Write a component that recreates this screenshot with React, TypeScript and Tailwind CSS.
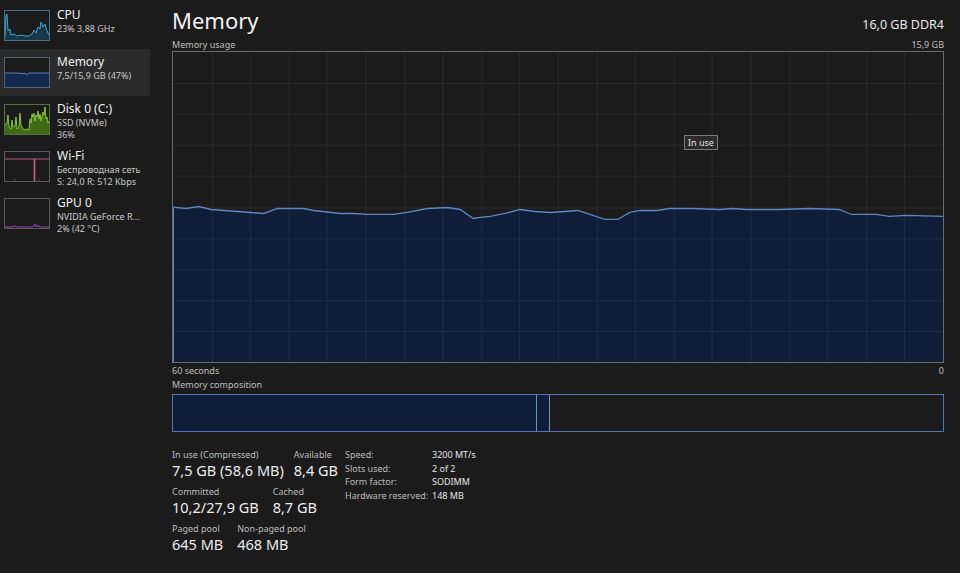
import React from "react";

const FONT = { fontFamily: '"Noto Sans", "Open Sans", Arial, sans-serif' };

const linePts: [number, number][] = [
  [172, 206.7], [185, 208], [198, 206], [210, 209], [237, 211], [250, 212], [263, 213], [277, 208],
  [303, 208], [313, 210], [340, 213], [353, 213], [367, 214], [393, 214], [407, 212], [427, 208],
  [447, 207], [460, 209], [473, 218], [480, 217], [490, 216], [505, 213], [520, 209], [535, 211],
  [550, 212], [565, 211], [578, 210], [590, 214], [605, 219], [618, 219], [630, 212], [640, 210],
  [657, 210], [670, 208], [693, 208], [720, 209], [733, 208], [747, 209], [780, 209], [810, 208],
  [840, 209], [852, 214], [877, 214], [890, 216], [907, 215], [944, 216],
];

function MemoryChart() {
  const W = 772;
  const H = 311;
  const pts = linePts.map(([x, y]) => [x - 172, y - 51] as [number, number]);
  const line = pts.map(([x, y], i) => `${i === 0 ? "M" : "L"}${x},${y}`).join(" ");
  const area = `${line} L${W},${H} L0,${H} Z`;
  const vLines = Array.from({ length: 19 }, (_, i) => Math.round(((i + 1) * W) / 20) + 0.5);
  const hLines = Array.from({ length: 9 }, (_, i) => Math.round(((i + 1) * H) / 10) + 0.5);
  return (
    <div className="relative h-[312px] w-full border border-[#6b6b6b] bg-[#1b1b1b]">
      <svg className="absolute inset-0 h-full w-full" viewBox={`0 0 ${W} ${H}`} preserveAspectRatio="none">
        <path d={area} fill="#0f1d38" />
        {vLines.map((x) => (
          <line key={"v" + x} x1={x} y1={0} x2={x} y2={H} stroke="#ffffff" strokeOpacity={0.07} strokeWidth={1} />
        ))}
        {hLines.map((y) => (
          <line key={"h" + y} x1={0} y1={y} x2={W} y2={y} stroke="#ffffff" strokeOpacity={0.07} strokeWidth={1} />
        ))}
        <path d={line} fill="none" stroke="#5d86c2" strokeWidth={1.3} />
        <line x1={0.5} y1={156} x2={0.5} y2={H} stroke="#5d86c2" strokeWidth={1} />
      </svg>
      <div className="absolute left-[511px] top-[83px] border border-[#7a7a7a] bg-[#2a2a2a] px-[3px] text-[9px] leading-[13px] text-[#e0e0e0]">
        In use
      </div>
    </div>
  );
}

function Thumb({ children, border }: { children: React.ReactNode; border: string }) {
  return (
    <div className="h-[31px] w-[46px] shrink-0 border bg-[#1b1b1b]" style={{ borderColor: border }}>
      <svg className="h-full w-full" viewBox="0 0 44 29" preserveAspectRatio="none">
        {children}
      </svg>
    </div>
  );
}

function SideItem({
  title,
  sub,
  thumb,
  selected,
}: {
  title: string;
  sub: string[];
  thumb: React.ReactNode;
  selected?: boolean;
}) {
  return (
    <div className={`flex h-[47px] items-start gap-[7px] pl-[4px] pt-[4px] ${selected ? "bg-[#2b2b2b]" : ""}`}>
      <div className="pt-[4px]">{thumb}</div>
      <div className="flex flex-col pt-[1px]">
        <div className="text-[12px] leading-[16px] text-[#f0f0f0]">{title}</div>
        {sub.map((s) => (
          <div key={s} className="text-[9px] leading-[12px] text-[#c8c8c8]">
            {s}
          </div>
        ))}
      </div>
    </div>
  );
}

function Label({ children }: { children: React.ReactNode }) {
  return <div className="whitespace-nowrap text-[9px] leading-[12px] text-[#bdbdbd]">{children}</div>;
}
function Value({ children }: { children: React.ReactNode }) {
  return <div className="whitespace-nowrap text-[14.5px] leading-[19px] text-[#ececec]">{children}</div>;
}

export default function App() {
  const cpuLine =
    "M0,26 L1,4 L2,3 L3,20 L5,18 L6,24 L9,23 L12,25 L16,24 L20,25 L24,25 L27,23 L29,19 L31,22 L33,16 L35,18 L36,11 L38,16 L40,13 L42,20 L44,24";
  const diskLine =
    "M0,20 L2,18 L3,10 L4,22 L6,24 L7,15 L8,22 L10,21 L11,12 L12,24 L14,22 L15,8 L16,20 L18,24 L20,25 L22,24 L24,25 L25,14 L26,18 L27,9 L28,12 L29,8 L30,16 L31,10 L32,12 L33,6 L34,14 L35,9 L36,16 L38,7 L39,10 L40,2 L41,14 L42,12 L43,18 L44,16";
  return (
    <div className="flex h-[573px] w-[960px] overflow-hidden bg-[#1b1b1b]" style={FONT}>
      {/* Sidebar */}
      <div className="flex w-[150px] shrink-0 flex-col pt-[2px]">
        <SideItem
          title="CPU"
          sub={["23%  3,88 GHz"]}
          thumb={
            <Thumb border="#4c6f80">
              <path d={`${cpuLine} L44,29 L0,29 Z`} fill="#163848" />
              <path d={cpuLine} fill="none" stroke="#3fb0e0" strokeWidth={0.9} />
            </Thumb>
          }
        />
        <SideItem
          title="Memory"
          sub={["7,5/15,9 GB (47%)"]}
          selected
          thumb={
            <Thumb border="#57606e">
              <path d="M0,15 L10,15 L20,15.5 L22,16.5 L24,15 L34,15 L44,15 L44,29 L0,29 Z" fill="#13294d" />
              <path d="M0,15 L10,15 L20,15.5 L22,16.5 L24,15 L34,15 L44,15" fill="none" stroke="#5d8ad0" strokeWidth={0.9} />
            </Thumb>
          }
        />
        <SideItem
          title="Disk 0 (C:)"
          sub={["SSD (NVMe)", "36%"]}
          thumb={
            <Thumb border="#5a6e3a">
              <path d={`${diskLine} L44,29 L0,29 Z`} fill="#3f6a16" />
              <path d={diskLine} fill="none" stroke="#8fd13f" strokeWidth={0.9} />
            </Thumb>
          }
        />
        <SideItem
          title="Wi-Fi"
          sub={["Беспроводная сеть", "S: 24,0  R: 512 Kbps"]}
          thumb={
            <Thumb border="#5a5a5a">
              <line x1={0} y1={7} x2={44} y2={7} stroke="#d05a90" strokeWidth={0.9} />
              <line x1={29.5} y1={7} x2={29.5} y2={29} stroke="#d05a90" strokeWidth={1.6} />
              <line x1={10} y1={26} x2={10} y2={29} stroke="#a04070" strokeWidth={0.6} />
              <line x1={34} y1={27} x2={34} y2={29} stroke="#a04070" strokeWidth={0.6} />
            </Thumb>
          }
        />
        <SideItem
          title="GPU 0"
          sub={["NVIDIA GeForce R...", "2% (42 °C)"]}
          thumb={
            <Thumb border="#585858">
              <path d="M0,28 L8,28 L10,27 L12,28 L28,28 L30,25 L31,28 L33,26 L34,28 L44,28" fill="none" stroke="#a050c0" strokeWidth={0.9} />
            </Thumb>
          }
        />
      </div>

      {/* Main */}
      <div className="flex flex-1 flex-col pl-[22px] pr-[16px]">
        <div className="flex items-baseline justify-between pt-[7px]">
          <div className="text-[22px] leading-[26px] text-[#f2f2f2]">Memory</div>
          <div className="text-[12.5px] leading-[16px] text-[#e8e8e8]">16,0 GB DDR4</div>
        </div>
        <div className="mt-[6px] flex justify-between">
          <Label>Memory usage</Label>
          <Label>15,9 GB</Label>
        </div>
        <MemoryChart />
        <div className="mt-[2px] flex justify-between">
          <Label>60 seconds</Label>
          <Label>0</Label>
        </div>
        <div className="mt-[2px]">
          <Label>Memory composition</Label>
        </div>
        <div className="mt-[3px] flex h-[38px] w-full border border-[#4f76b3]">
          <div className="h-full w-[364px] border-r border-[#6b92cf] bg-[#0f1d38]" />
          <div className="h-full w-[13px] border-r border-[#6b92cf] bg-[#0f1d38]" />
          <div className="h-full flex-1" />
        </div>

        {/* Stats */}
        <div className="mt-[17px] flex items-start gap-[9px]">
          <div className="flex w-[164px] shrink-0 flex-col">
            <div className="flex gap-[10px]">
              <div>
                <Label>In use (Compressed)</Label>
                <Value>7,5 GB (58,6 MB)</Value>
              </div>
              <div>
                <Label>Available</Label>
                <Value>8,4 GB</Value>
              </div>
            </div>
            <div className="mt-[6px] flex gap-[14px]">
              <div>
                <Label>Committed</Label>
                <Value>10,2/27,9 GB</Value>
              </div>
              <div>
                <Label>Cached</Label>
                <Value>8,7 GB</Value>
              </div>
            </div>
            <div className="mt-[6px] flex gap-[14px]">
              <div>
                <Label>Paged pool</Label>
                <Value>645 MB</Value>
              </div>
              <div>
                <Label>Non-paged pool</Label>
                <Value>468 MB</Value>
              </div>
            </div>
          </div>
          <div className="grid grid-cols-[87px_auto] content-start gap-y-[1px] self-start text-[9px] leading-[12.5px]">
            <div className="text-[#bdbdbd]">Speed:</div>
            <div className="text-[#e6e6e6]">3200 MT/s</div>
            <div className="text-[#bdbdbd]">Slots used:</div>
            <div className="text-[#e6e6e6]">2 of 2</div>
            <div className="text-[#bdbdbd]">Form factor:</div>
            <div className="text-[#e6e6e6]">SODIMM</div>
            <div className="text-[#bdbdbd]">Hardware reserved:</div>
            <div className="text-[#e6e6e6]">148 MB</div>
          </div>
        </div>
      </div>
    </div>
  );
}
